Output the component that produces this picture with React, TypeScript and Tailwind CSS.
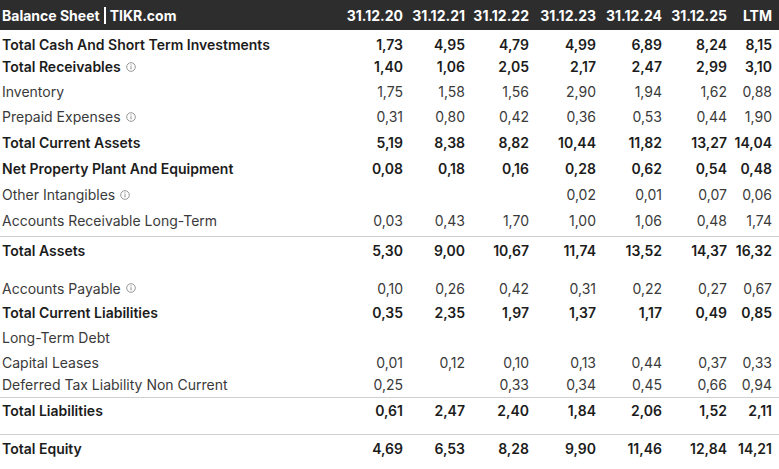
import React from "react";

type Row = {
  label: string;
  values: string[];
  bold?: boolean;
  info?: boolean;
  h: number;
  mt?: number;
  line?: boolean;
};

const rows: Row[] = [
  { label: "Total Cash And Short Term Investments", values: ["1,73", "4,95", "4,79", "4,99", "6,89", "8,24", "8,15"], bold: true, h: 21, mt: 4 },
  { label: "Total Receivables", values: ["1,40", "1,06", "2,05", "2,17", "2,47", "2,99", "3,10"], bold: true, info: true, h: 23 },
  { label: "Inventory", values: ["1,75", "1,58", "1,56", "2,90", "1,94", "1,62", "0,88"], h: 26 },
  { label: "Prepaid Expenses", values: ["0,31", "0,80", "0,42", "0,36", "0,53", "0,44", "1,90"], info: true, h: 25 },
  { label: "Total Current Assets", values: ["5,19", "8,38", "8,82", "10,44", "11,82", "13,27", "14,04"], bold: true, h: 26 },
  { label: "Net Property Plant And Equipment", values: ["0,08", "0,18", "0,16", "0,28", "0,62", "0,54", "0,48"], bold: true, h: 27 },
  { label: "Other Intangibles", values: ["", "", "", "0,02", "0,01", "0,07", "0,06"], info: true, h: 25 },
  { label: "Accounts Receivable Long-Term", values: ["0,03", "0,43", "1,70", "1,00", "1,06", "0,48", "1,74"], h: 26 },
  { label: "Total Assets", values: ["5,30", "9,00", "10,67", "11,74", "13,52", "14,37", "16,32"], bold: true, h: 27, mt: 3, line: true },
  { label: "Accounts Payable", values: ["0,10", "0,26", "0,42", "0,31", "0,22", "0,27", "0,67"], info: true, h: 26, mt: 12 },
  { label: "Total Current Liabilities", values: ["0,35", "2,35", "1,97", "1,37", "1,17", "0,49", "0,85"], bold: true, h: 22 },
  { label: "Long-Term Debt", values: ["", "", "", "", "", "", ""], h: 28 },
  { label: "Capital Leases", values: ["0,01", "0,12", "0,10", "0,13", "0,44", "0,37", "0,33"], h: 22 },
  { label: "Deferred Tax Liability Non Current", values: ["0,25", "", "0,33", "0,34", "0,45", "0,66", "0,94"], h: 22 },
  { label: "Total Liabilities", values: ["0,61", "2,47", "2,40", "1,84", "2,06", "1,52", "2,11"], bold: true, h: 26, mt: 2, line: true },
  { label: "Total Equity", values: ["4,69", "6,53", "8,28", "9,90", "11,46", "12,84", "14,21"], bold: true, h: 27, mt: 11, line: true },
];

const headers = ["31.12.20", "31.12.21", "31.12.22", "31.12.23", "31.12.24", "31.12.25", "LTM"];

function InfoIcon() {
  return (
    <svg width="10" height="10" viewBox="0 0 10 10" className="ml-[5px] inline-block" aria-hidden>
      <circle cx="5" cy="5" r="4.3" fill="none" stroke="#8a8a8a" strokeWidth="0.9" />
      <line x1="5" y1="4.3" x2="5" y2="7.3" stroke="#8a8a8a" strokeWidth="1" />
      <circle cx="5" cy="2.9" r="0.6" fill="#8a8a8a" />
    </svg>
  );
}

const grid = "grid grid-cols-[343px_60px_62px_64px_67px_66px_65px_45px] pr-[7px]";

export default function App() {
  return (
    <div className="w-[779px] h-[469px] bg-white overflow-hidden" style={{ fontFamily: "Inter, 'Noto Sans', sans-serif" }}>
      <div className={`${grid} h-[30px] items-center bg-[#2d2d2d] text-white font-bold text-[14px]`}>
        <div className="pl-[2px] flex items-center">
          <span>Balance Sheet</span>
          <span className="mx-[4px] inline-block w-[2px] h-[17px] bg-white" />
          <span>TIKR.com</span>
        </div>
        {headers.map((h) => (
          <div key={h} className="text-right">{h}</div>
        ))}
      </div>
      {rows.map((r) => (
        <div
          key={r.label}
          className={`${grid} items-center text-[14px] ${r.line ? "border-t border-[#cfcfcf]" : ""} ${r.bold ? "font-semibold text-[#1c1c1c]" : "font-normal text-[#3a3a3a]"}`}
          style={{ height: r.h, marginTop: r.mt ?? 0 }}
        >
          <div className="pl-[2px] flex items-center whitespace-nowrap">
            <span>{r.label}</span>
            {r.info && <InfoIcon />}
          </div>
          {r.values.map((v, i) => (
            <div key={i} className="text-right">{v}</div>
          ))}
        </div>
      ))}
    </div>
  );
}
